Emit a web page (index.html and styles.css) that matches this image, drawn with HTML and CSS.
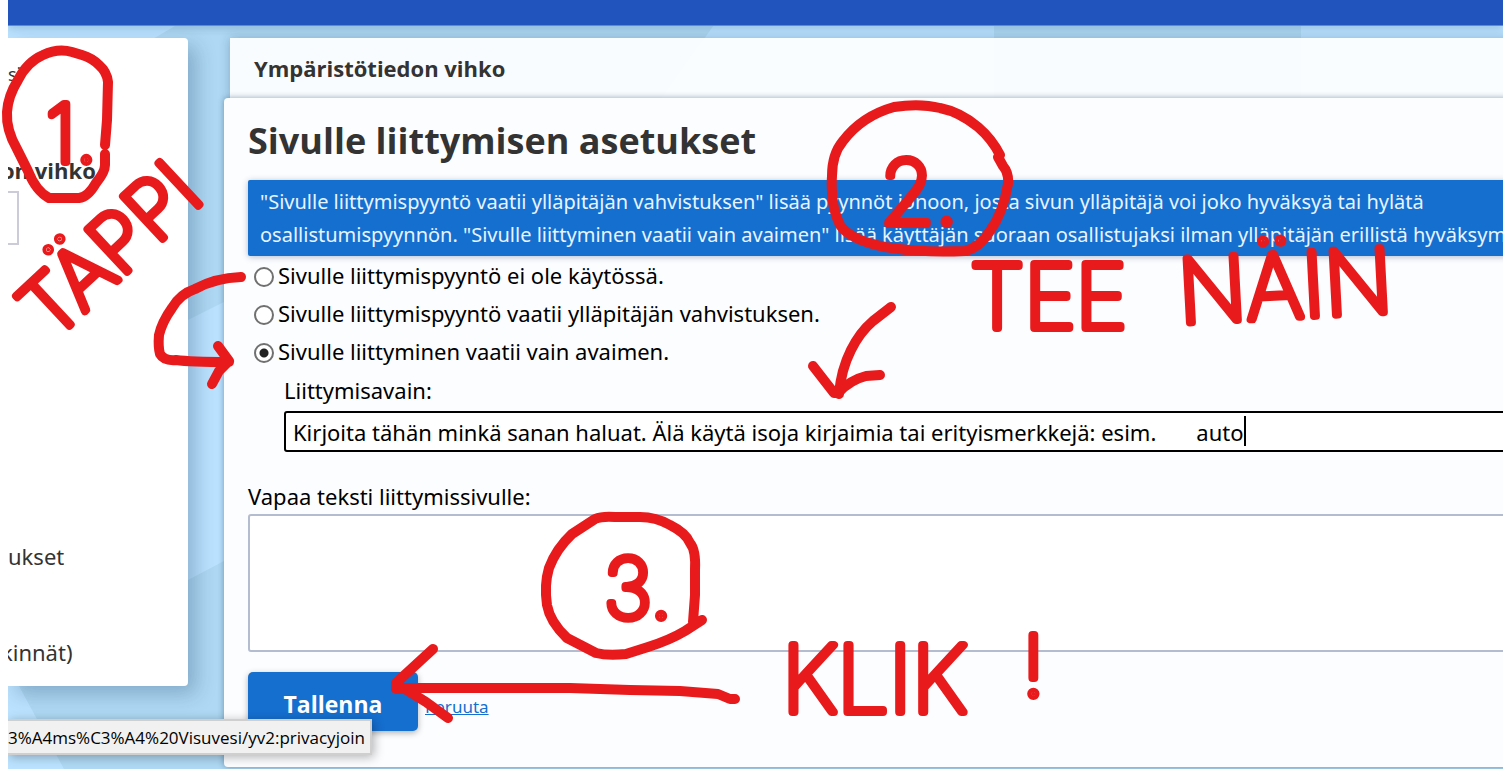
FILE: index.html
```
<!DOCTYPE html>
<html lang="fi">
<head>
    <meta charset="UTF-8">
    <meta name="viewport" content="width=device-width, initial-scale=1.0">
    <title>Sivulle liittymisen asetukset</title>
    <link rel="stylesheet" href="styles.css">
</head>
<body>
    <div class="page">
        <!-- Background shapes -->
        <svg class="backdrop" viewBox="0 0 1503 769" preserveAspectRatio="xMinYMin slice" aria-hidden="true">
            <rect width="1503" height="769" fill="#aed8f3"/>
            <path d="M0 0H215L175 26L90 76L0 120Z" fill="#bbe3ff"/>
            <path d="M732 0H990L994 26V100H660Z" fill="#bbe3ff"/>
            <path d="M1301 0H1503V160H1301Z" fill="#bbe3ff"/>
            <path d="M0 420L188 320L224 302V561L188 580L0 670Z" fill="#bbe3ff"/>
            <path d="M0 660H8L19 686L64 769H0Z" fill="#bbe3ff"/>
        </svg>

        <header class="topbar"></header>

        <div class="layout">
            <nav class="sidebar">
                <span class="crumb">si</span>
                <label class="nav-title cut" for="search">on vihko</label>
                <input class="search" id="search" type="text">
                <a class="nav-link" href="#">ukset</a>
                <a class="nav-link last cut" href="#">kinnät)</a>
            </nav>

            <div class="content">
                <div class="page-name">Ympäristötiedon vihko</div>
                <form class="panel">
                    <h1>Sivulle liittymisen asetukset</h1>
                    <p class="info">"Sivulle liittymispyyntö vaatii ylläpitäjän vahvistuksen" lisää pyynnöt jonoon, josta sivun ylläpitäjä voi joko hyväksyä tai hylätä<br>osallistumispyynnön. "Sivulle liittyminen vaatii vain avaimen" lisää käyttäjän suoraan osallistujaksi ilman ylläpitäjän erillistä hyväksymistä.</p>
                    <div class="choices">
                        <label><input type="radio" name="join">Sivulle liittymispyyntö ei ole käytössä.</label>
                        <label><input type="radio" name="join">Sivulle liittymispyyntö vaatii ylläpitäjän vahvistuksen.</label>
                        <label><input type="radio" name="join" checked>Sivulle liittyminen vaatii vain avaimen.</label>
                    </div>
                    <div class="key">
                        <label for="key">Liittymisavain:</label>
                        <input id="key" type="text" value="Kirjoita tähän minkä sanan haluat. Älä käytä isoja kirjaimia tai erityismerkkejä: esim.       auto">
                    </div>
                    <label class="free-label" for="free">Vapaa teksti liittymissivulle:</label>
                    <textarea id="free"></textarea>
                    <div class="actions">
                        <button type="button">Tallenna</button>
                        <a href="#">Peruuta</a>
                    </div>
                </form>
            </div>
        </div>

        <div class="status">3%A4ms%C3%A4%20Visuvesi/yv2:privacyjoin</div>
    </div>

    <!-- Marker notes on top of the page -->
    <svg class="notes" width="1503" height="769" viewBox="0 0 1503 769">
        <!-- text cursor -->
        <path class="caret" d="M1245 416V446"/>

        <!-- 1. -->
        <path d="M105 145L107 120L108 82Q107 72 99 65Q92 58 82 55L72 52Q58 48 43 55Q27 62 18 80Q8 96 7 112Q6 130 17 149L28 171Q36 191 49 198H79Q88 197 96 183Q105 172 105 165V154"/>
        <path d="M241 277Q215 278 195 289Q180 294 172 308Q162 322 159 335Q158 347 160 354Q164 361 176 360Q190 362 229 362M218 346L229 361L219 371L212 384"/>

        <!-- 2. -->
        <path d="M1000 155Q992 139 978 127Q960 112 940 108Q920 103 894 107Q862 116 843 141Q832 154 832 176Q830 205 840 225Q850 240 885 247Q920 253 965 251Q979 248 990 231Q1003 213 1008 184Q1009 173 1003 166L998 157"/>
        <path d="M891 307L873 321Q860 332 851 350Q841 370 839 394M813 366L834 393H838Q850 380 866 376L880 375"/>

        <!-- 3. -->
        <path d="M702 620L685 631Q670 640 648 647L626 654Q608 656 596 653L567 638Q550 622 547 605Q544 585 549 568Q556 549 572 534L595 519Q602 516 615 517H640Q656 517 670 525Q686 533 690 543Q696 550 695 570V595L693 622"/>
        <path d="M735 699H730L718 694L680 691L630 690L570 688H396M433 649L396 683V689H405L426 702L448 718"/>

        <g class="words">
            <text x="46" y="162" font-size="80">1.</text>
            <text x="880" y="224" font-size="88">2.</text>
            <text x="604" y="618" font-size="82">3.</text>
            <text transform="translate(52 342) rotate(-43)" font-size="80">TÄPPI</text>
            <text x="970" y="328" font-size="88">TEE</text>
            <text transform="translate(1180 323) rotate(-3)" font-size="88">NÄIN</text>
            <text x="782" y="712" font-size="92">KLIK</text>
            <text x="1022" y="696" font-size="84">!</text>
        </g>
    </svg>
</body>
</html>
```
FILE: styles.css
```
* {
    box-sizing: border-box;
}

body {
    margin: 0;
    font-family: "Noto Sans", "Open Sans", sans-serif;
    font-size: 22px;
    color: #000;
    overflow: hidden;
    background: #fff;
}

.page {
    position: relative;
    margin-left: 8px;
    min-height: 100vh;
    overflow: hidden;
}

.backdrop {
    position: absolute;
    top: 0;
    left: -8px;
    width: 100%;
    height: 100%;
    min-width: 1503px;
    z-index: -1;
}

.topbar {
    height: 26px;
    background: #2155bd;
    border-bottom: 1px solid #5a8ad8;
    box-shadow: 0 2px 8px rgba(0, 40, 90, 0.2);
}

.layout {
    display: flex;
    align-items: flex-start;
    gap: 36px;
    padding-top: 12px;
}

/* Left menu, cut by the edge of the window */
.sidebar {
    flex: 0 0 180px;
    display: flex;
    flex-direction: column;
    height: 648px;
    padding-bottom: 18px;
    background: #fff;
    border-radius: 0 4px 4px 0;
    box-shadow: 8px 8px 20px rgba(0, 40, 80, 0.25);
    color: #333;
    line-height: 32px;
}

.crumb {
    margin-top: 20px;
    font-size: 18px;
}

.nav-title {
    margin-top: 64px;
    font-family: "Open Sans", sans-serif;
    font-weight: bold;
}

.cut {
    margin-left: -7px;
}

.search {
    width: 11px;
    height: 54px;
    margin-top: 5px;
    border: 2px solid #ccccd8;
    border-left: none;
    background: #fff;
}

.nav-link {
    margin-top: auto;
    color: #333;
    text-decoration: none;
}

.last {
    margin-top: 64px;
}

.content {
    flex: 1;
    min-width: 0;
    margin-right: -80px;
}

.page-name {
    height: 60px;
    margin-left: 6px;
    padding: 0 24px;
    font-family: "Open Sans", sans-serif;
    font-weight: bold;
    line-height: 60px;
    color: #333;
    background: rgba(255, 255, 255, 0.92);
    box-shadow: 0 0 10px rgba(0, 40, 80, 0.25);
}

.panel {
    position: relative;
    padding: 16px 24px 36px;
    border-radius: 4px;
    background: #fcfdff;
    box-shadow: 0 0 6px rgba(0, 40, 80, 0.4);
}

h1 {
    margin: 0;
    font-family: "Open Sans", sans-serif;
    font-size: 36px;
    line-height: 54px;
    color: #333;
}

.info {
    margin: 12px 0 0;
    padding: 5px 12px;
    font-size: 20px;
    line-height: 33px;
    white-space: nowrap;
    color: #e8f4ff;
    background: #156fcf;
    border-radius: 2px;
    box-shadow: 0 1px 6px rgba(0, 40, 80, 0.3);
    overflow: hidden;
}

.choices label {
    display: flex;
    align-items: center;
    gap: 4px;
    height: 38px;
    padding-left: 6px;
}

.choices input {
    appearance: none;
    width: 20px;
    height: 20px;
    margin: 4px 0 0;
    border: 2px solid #707070;
    border-radius: 50%;
    background: #fff;
}

.choices input:checked {
    background: radial-gradient(circle, #222 0 4px, #fff 5px);
}

.key {
    padding-left: 36px;
}

.key label {
    display: block;
    line-height: 41px;
}

.key input {
    display: block;
    width: 100%;
    height: 41px;
    padding: 0 7px;
    border: 2px solid #000;
    border-radius: 3px;
    font: inherit;
    background: #fff;
}

.free-label {
    display: block;
    margin-top: 27px;
    line-height: 35px;
}

textarea {
    display: block;
    width: 100%;
    height: 138px;
    border: 2px solid #b4bccf;
    border-radius: 3px;
    background: #fff;
    resize: none;
}

.actions {
    display: flex;
    align-items: flex-end;
    gap: 7px;
    margin-top: 20px;
}

.actions button {
    width: 170px;
    height: 59px;
    padding: 4px 0 0;
    border: none;
    border-radius: 5px;
    font: bold 23px "Open Sans", sans-serif;
    color: #fff;
    background: #156fcf;
    box-shadow: 0 2px 6px rgba(0, 0, 0, 0.3);
}

.actions a {
    padding-bottom: 13px;
    font-size: 17px;
    color: #156fcf;
}

.status {
    position: absolute;
    left: 0;
    bottom: 14px;
    height: 36px;
    padding-right: 5px;
    border: 2px solid #cfcfcf;
    border-left: none;
    font-family: "Open Sans", sans-serif;
    font-size: 17px;
    line-height: 34px;
    background: #f1f1f1;
    box-shadow: 2px 2px 10px rgba(0, 0, 0, 0.3);
}

/* Red marker */
.notes {
    position: absolute;
    top: 0;
    left: 0;
    pointer-events: none;
    fill: none;
    stroke: #e81a1c;
    stroke-width: 10px;
    stroke-linecap: round;
    stroke-linejoin: round;
}

.notes .caret {
    stroke: #000;
    stroke-width: 2px;
    stroke-linecap: butt;
}

.words {
    font-family: Inter, sans-serif;
    font-weight: 100;
    fill: #e81a1c;
    stroke-width: 8px;
}
```
